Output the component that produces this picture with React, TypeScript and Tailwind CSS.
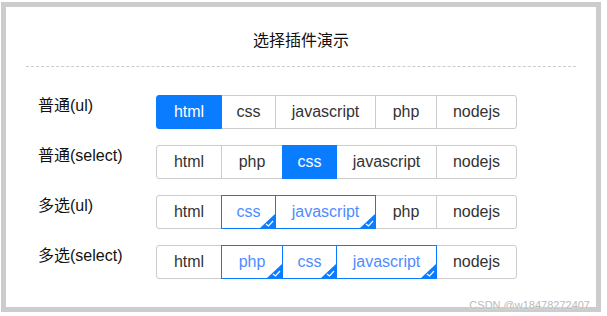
import React from "react";

const WIDTHS: Record<string, number> = {
  html: 66,
  css: 55,
  javascript: 101,
  php: 62,
  nodejs: 81,
};

interface GroupProps {
  items: string[];
  active?: string[];
  multi?: boolean;
}

function CheckCorner() {
  return (
    <svg className="absolute right-0 bottom-0" width="15" height="14" viewBox="0 0 15 14">
      <polygon points="15,0 15,14 0,14" fill="#0a7cff" />
      <polyline points="6,10 8.5,12 13,7" fill="none" stroke="#fff" strokeWidth="1.2" />
    </svg>
  );
}

function SelectGroup({ items, active = [], multi = false }: GroupProps) {
  return (
    <div className="flex">
      {items.map((it, idx) => {
        const on = active.includes(it);
        const first = idx === 0;
        const last = idx === items.length - 1;
        let cls = "border-[#ccc] text-[#333] bg-white";
        if (on && !multi) cls = "border-[#0a7cff] bg-[#0a7cff] text-white z-10";
        if (on && multi) cls = "border-[#0a7cff] text-[#4f8cff] bg-white z-10";
        return (
          <div
            key={it}
            style={{ width: WIDTHS[it] }}
            className={`relative h-[34px] border flex items-center justify-center text-[16px] ${cls} ${first ? "rounded-l-[3px]" : "-ml-px"} ${last ? "rounded-r-[3px]" : ""}`}
          >
            {it}
            {on && multi && <CheckCorner />}
          </div>
        );
      })}
    </div>
  );
}

const rows: { label: string; items: string[]; active: string[]; multi?: boolean }[] = [
  { label: "普通(ul)", items: ["html", "css", "javascript", "php", "nodejs"], active: ["html"] },
  { label: "普通(select)", items: ["html", "php", "css", "javascript", "nodejs"], active: ["css"] },
  { label: "多选(ul)", items: ["html", "css", "javascript", "php", "nodejs"], active: ["css", "javascript"], multi: true },
  { label: "多选(select)", items: ["html", "php", "css", "javascript", "nodejs"], active: ["php", "css", "javascript"], multi: true },
];

export default function App() {
  return (
    <div
      className="w-[607px] h-[316px] bg-white pt-[2px] pl-px"
      style={{ fontFamily: '"Liberation Sans", "Noto Sans CJK SC", sans-serif' }}
    >
      <div className="relative w-[600px] h-[310px] border-[5px] border-[#ccc] bg-white">
        <h1 className="pt-[24px] text-center text-[16px] leading-[20px] text-[#111]">选择插件演示</h1>
        <div className="mx-[20px] mt-[15px] border-t border-dashed border-[#ccc]" />

        <div className="mt-[28px] pl-[32px] flex flex-col gap-[16px]">
          {rows.map((r) => (
            <div key={r.label} className="flex items-start">
              <div className="w-[118px] text-[16px] leading-[20px] text-[#111] pt-[1px]">{r.label}</div>
              <SelectGroup items={r.items} active={r.active} multi={r.multi} />
            </div>
          ))}
        </div>

        <span className="absolute right-[6px] bottom-[-5px] text-[11px] leading-[13px] text-[#bbb] [text-shadow:0_0_2px_#fff]">
          CSDN @w18478272407
        </span>
      </div>
    </div>
  );
}
